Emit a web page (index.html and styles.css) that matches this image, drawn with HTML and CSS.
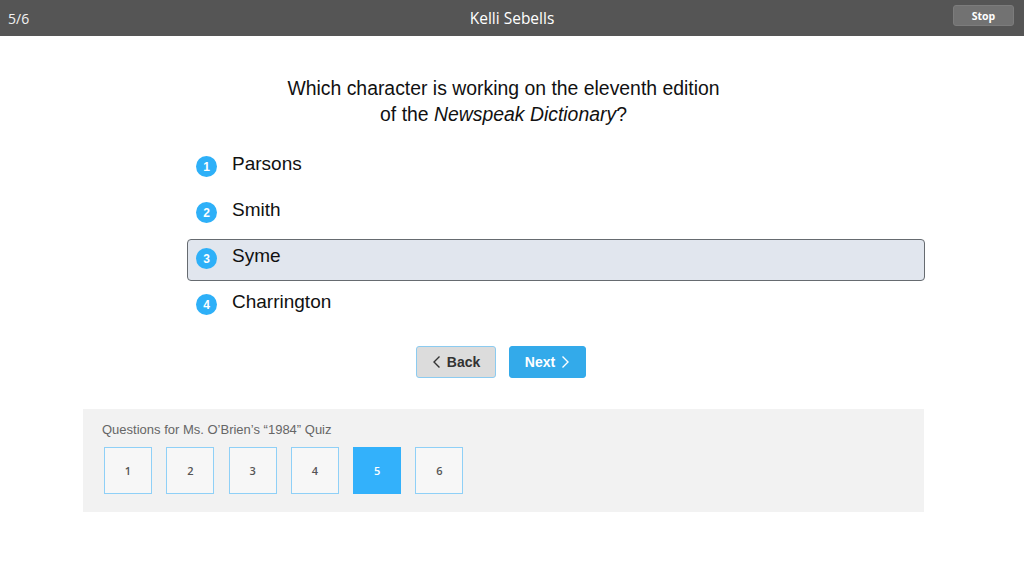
FILE: index.html
```html
<!DOCTYPE html>
<html>
<head>
<meta charset="utf-8">
<link rel="stylesheet" href="styles.css">
</head>
<body>
<header class="topbar">
  <span class="counter">5/6</span>
  <span class="title">Kelli Sebells</span>
  <button class="stop">Stop</button>
</header>
<main class="content">
  <h1 class="question">Which character is working on the eleventh edition<br>of the <em>Newspeak Dictionary</em>?</h1>
  <ul class="options">
    <li class="option"><span class="num">1</span><span class="label">Parsons</span></li>
    <li class="option"><span class="num">2</span><span class="label">Smith</span></li>
    <li class="option selected"><span class="num">3</span><span class="label">Syme</span></li>
    <li class="option"><span class="num">4</span><span class="label">Charrington</span></li>
  </ul>
  <div class="nav">
    <button class="btn back"><svg width="10" height="14" viewBox="0 0 10 14"><path d="M7.5 1.5 L2 7 L7.5 12.5" fill="none" stroke="#333" stroke-width="1.4"/></svg>Back</button>
    <button class="btn next">Next<svg width="10" height="14" viewBox="0 0 10 14"><path d="M2.5 1.5 L8 7 L2.5 12.5" fill="none" stroke="#fff" stroke-width="1.4"/></svg></button>
  </div>
  <section class="panel">
    <div class="panel-title">Questions for Ms. O’Brien’s “1984” Quiz</div>
    <div class="boxes">
      <div class="qbox">1</div>
      <div class="qbox">2</div>
      <div class="qbox">3</div>
      <div class="qbox">4</div>
      <div class="qbox active">5</div>
      <div class="qbox">6</div>
    </div>
  </section>
</main>
</body>
</html>
```
FILE: styles.css
```css
* { box-sizing: border-box; }
html, body { margin: 0; padding: 0; background: #fff; }
body { width: 1024px; height: 576px; overflow: hidden; font-family: "Liberation Sans", Arial, sans-serif; }

.topbar {
  height: 36px;
  background: #555555;
  display: flex;
  align-items: center;
  justify-content: space-between;
  padding: 0 10px 0 8px;
  position: relative;
}
.counter { color: #f2f2f2; font-family: "Open Sans", "Noto Sans", sans-serif; font-size: 14px; }
.title {
  position: absolute; left: 0; right: 0; text-align: center;
  color: #fff; font-family: "Open Sans", "Noto Sans", sans-serif; font-size: 15.5px; pointer-events: none;
}
.stop {
  width: 61px; height: 21px; margin-top: -5px;
  background: #727272; border: 1px solid #7c7c7c; border-radius: 3px;
  color: #fff; font-family: "Open Sans", "Noto Sans", sans-serif; font-weight: bold; font-size: 10.5px;
  padding: 0; position: relative; z-index: 1;
}

.content { width: 1007px; display: flex; flex-direction: column; align-items: center; }
.question {
  margin: 39px 0 0 0;
  font-weight: normal; font-size: 19.4px; line-height: 26px; color: #111; text-align: center;
}
.question em { font-style: italic; }

.options { list-style: none; margin: 20px 0 0 187px; padding: 0; width: 738px; align-self: flex-start; }
.option {
  height: 42px; display: flex; align-items: center; padding: 0 0 3px 8px;
  border: 1.5px solid transparent; border-radius: 4px; margin-bottom: 4px;
}
.option.selected { background: #e1e6ee; border-color: #666b70; }
.num {
  width: 21px; height: 21px; border-radius: 50%; background: #2eb0f8; color: #fff;
  font-size: 12px; font-weight: bold; display: flex; align-items: center; justify-content: center;
}
.label { margin-left: 15px; font-size: 19px; color: #111; margin-top: -5px; }

.nav { display: flex; gap: 13px; margin-top: 15px; margin-left: -5px; }
.btn {
  height: 32px; border-radius: 3px; font-family: "Liberation Sans", Arial, sans-serif;
  font-size: 14px; font-weight: bold; display: flex; align-items: center; justify-content: center; gap: 5px; padding: 0;
}
.back { width: 80px; background: #dcdcdc; border: 1px solid #8ccbf0; color: #333; }
.next { width: 77px; background: #33aaea; border: 1px solid #33aaea; color: #fff; }

.panel {
  width: 841px; height: 103px; background: #f2f2f2; margin-top: 31px; padding: 13px 0 0 19px;
}
.panel-title { font-size: 13px; color: #666; }
.boxes { display: flex; gap: 14.3px; margin-top: 10px; padding-left: 2px; }
.qbox {
  width: 48px; height: 47px; border: 1px solid #8fd0f7; background: #f7f7f7;
  display: flex; align-items: center; justify-content: center;
  font-family: "Open Sans", "Noto Sans", sans-serif; font-size: 11px; font-weight: 600; color: #555;
}
.qbox.active { background: #33b1fb; border-color: #33b1fb; color: #fff; }
```
